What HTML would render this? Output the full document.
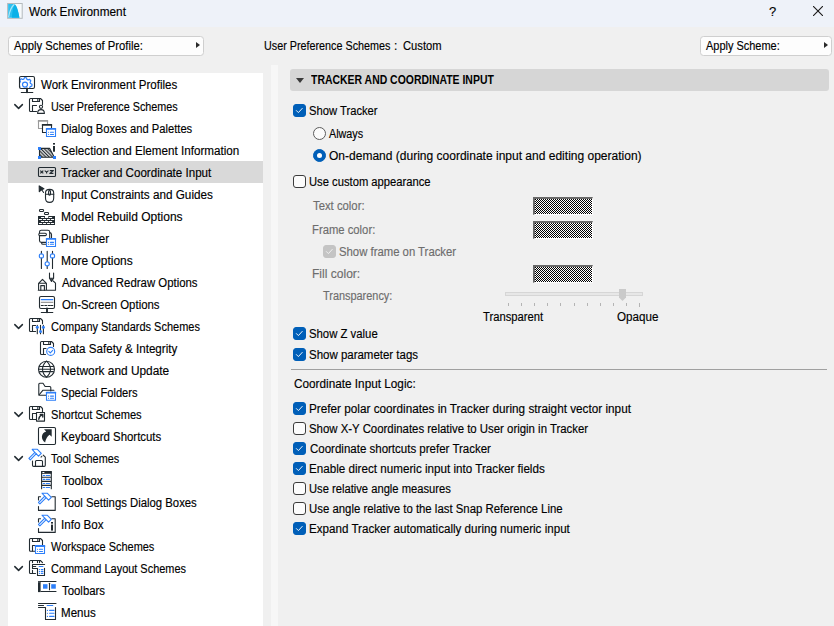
<!DOCTYPE html>
<html><head><meta charset="utf-8">
<style>
*{box-sizing:border-box;margin:0;padding:0}
html,body{width:834px;height:626px;overflow:hidden;background:#f0f0f0;font-family:"Liberation Sans",sans-serif;font-size:12px;color:#000}
.a{position:absolute}
.t{position:absolute;white-space:nowrap;line-height:14px;height:14px;transform-origin:0 0;-webkit-text-stroke:0.15px currentColor}
.gr{color:#6d6d6d}
#title{position:absolute;left:0;top:0;width:834px;height:27px;background:#eef2f9}
.btn{position:absolute;background:#fdfdfd;border:1px solid #cfcfcf;border-radius:3.5px}
.arr{position:absolute;width:0;height:0;border-top:3.5px solid transparent;border-bottom:3.5px solid transparent;border-left:4.5px solid #2a2a2a}
.cb{position:absolute;width:13px;height:13px;border:1px solid #3c3c3c;border-radius:3px;background:#fcfcfc}
.cb.on{background:#005fb8;border-color:#005fb8}
.cb svg{position:absolute;left:1px;top:1px}
.cb.dis{background:#c4c4c4;border-color:#c4c4c4}
.rd{position:absolute;width:13px;height:13px;border:1px solid #5c5c5c;border-radius:50%;background:#fbfbfb}
.rd.on{background:#005fb8;border-color:#005fb8}
.rd.on::after{content:"";position:absolute;left:3px;top:3px;width:5px;height:5px;border-radius:50%;background:#fff}
.sw{position:absolute;width:60px;height:18px;background-color:#fff;
 background-image:linear-gradient(45deg,#000 25%,transparent 25%,transparent 75%,#000 75%),linear-gradient(45deg,#000 25%,transparent 25%,transparent 75%,#000 75%);
 background-size:2px 2px;background-position:1px 0,0 1px;
 border-top:2px solid #6a6a6a;border-left:2px solid #6a6a6a;border-bottom:1px solid #fff;border-right:1px solid #fff}
.tick{position:absolute;top:303px;width:1px;height:3px;background:#b4b4b4}
</style></head><body>
<div id="title"></div>
<svg class="a" style="left:0;top:0" width="30" height="26" viewBox="0 0 30 26">
  <rect x="7.6" y="3.5" width="14.6" height="14.8" fill="#f6fafc" stroke="#b4b9bd" stroke-width="1"/>
  <path d="M8.1 4H14.3C16.6 5.2 18 10 19.4 17.8H8.1Z" fill="#2ec0ef"/>
  <path d="M11.8 17.8C12.5 11 13.2 6.5 14.6 4.6C16.6 6 18 10 19.4 17.8Z" fill="#0cb1e8"/>
  <path d="M8.6 17.2C9.5 12 11.5 6.5 14.4 4.3" fill="none" stroke="#a8e6f9" stroke-width="1.1"/>
</svg>
<div class="t" style="left:769px;top:5px;font-size:13px">?</div>
<svg class="a" style="left:813px;top:6px" width="10" height="10" viewBox="0 0 10 10"><path d="M0 0L10 10M10 0L0 10" stroke="#1a1a1a" stroke-width="1.1"/></svg>

<div class="btn" style="left:8px;top:36px;width:196px;height:20px"></div>
<div class="arr" style="left:196px;top:42px"></div>
<div class="t" style="left:394px;top:39px">:</div>
<div class="btn" style="left:700px;top:36px;width:132px;height:20px"></div>
<div class="arr" style="left:824px;top:42px"></div>

<div class="a" style="left:8px;top:73px;width:255px;height:553px;background:#fff"></div>
<div class="a" style="left:8px;top:161px;width:255px;height:22px;background:#d9d9d9"></div>
<div class="a" style="left:271px;top:65px;width:7px;height:561px;background:#f7f7f7"></div>

<div class="a" style="left:290px;top:69px;width:539px;height:22px;background:#d6d6d6;border-radius:3px"></div>
<div class="a" style="left:296px;top:78px;width:0;height:0;border-left:4px solid transparent;border-right:4px solid transparent;border-top:5px solid #3a3a3a"></div>
<div class="cb on" style="left:293px;top:104px"><svg width="11" height="11" viewBox="0 0 11 11"><path d="M1.1 4.3L3.4 6.6L7.5 2.1" fill="none" stroke="#eaf2fb" stroke-width="1"/></svg></div>
<div class="rd" style="left:313px;top:127px"></div>
<div class="rd on" style="left:313px;top:149px"></div>
<div class="cb" style="left:293px;top:175px"></div>
<div class="sw" style="left:533px;top:197px"></div>
<div class="sw" style="left:533px;top:221px"></div>
<div class="cb dis" style="left:323px;top:245px"><svg width="11" height="11" viewBox="0 0 11 11"><path d="M1.1 4.3L3.4 6.6L7.5 2.1" fill="none" stroke="#f0f0f0" stroke-width="1"/></svg></div>
<div class="sw" style="left:533px;top:265px"></div>
<div class="a" style="left:505px;top:292px;width:138px;height:4px;background:#e7e7e7;border:1px solid #d6d6d6"></div>
<svg class="a" style="left:618px;top:289px" width="9" height="12" viewBox="0 0 9 12"><path d="M1 0H8V8.6L4.5 12L1 8.6Z" fill="#cacaca"/></svg>
<div class="tick" style="left:508px"></div><div class="tick" style="left:521px"></div><div class="tick" style="left:534px"></div><div class="tick" style="left:547px"></div><div class="tick" style="left:560px"></div><div class="tick" style="left:574px"></div><div class="tick" style="left:587px"></div><div class="tick" style="left:600px"></div><div class="tick" style="left:613px"></div><div class="tick" style="left:626px"></div><div class="tick" style="left:639px;height:4px"></div>
<div class="cb on" style="left:293px;top:327px"><svg width="11" height="11" viewBox="0 0 11 11"><path d="M1.1 4.3L3.4 6.6L7.5 2.1" fill="none" stroke="#eaf2fb" stroke-width="1"/></svg></div>
<div class="cb on" style="left:293px;top:348px"><svg width="11" height="11" viewBox="0 0 11 11"><path d="M1.1 4.3L3.4 6.6L7.5 2.1" fill="none" stroke="#eaf2fb" stroke-width="1"/></svg></div>
<div class="a" style="left:291px;top:369px;width:536px;height:1px;background:#a0a0a0"></div>
<div class="cb on" style="left:293px;top:402px"><svg width="11" height="11" viewBox="0 0 11 11"><path d="M1.1 4.3L3.4 6.6L7.5 2.1" fill="none" stroke="#eaf2fb" stroke-width="1"/></svg></div>
<div class="cb" style="left:293px;top:422px"></div>
<div class="cb on" style="left:293px;top:442px"><svg width="11" height="11" viewBox="0 0 11 11"><path d="M1.1 4.3L3.4 6.6L7.5 2.1" fill="none" stroke="#eaf2fb" stroke-width="1"/></svg></div>
<div class="cb on" style="left:293px;top:462px"><svg width="11" height="11" viewBox="0 0 11 11"><path d="M1.1 4.3L3.4 6.6L7.5 2.1" fill="none" stroke="#eaf2fb" stroke-width="1"/></svg></div>
<div class="cb" style="left:293px;top:482px"></div>
<div class="cb" style="left:293px;top:502px"></div>
<div class="cb on" style="left:293px;top:522px"><svg width="11" height="11" viewBox="0 0 11 11"><path d="M1.1 4.3L3.4 6.6L7.5 2.1" fill="none" stroke="#eaf2fb" stroke-width="1"/></svg></div>
<svg class="a" style="left:0;top:0" width="270" height="626" viewBox="0 0 270 626">
<defs>
<clipPath id="mon"><rect x="20" y="77" width="14.3" height="11"/></clipPath>
<pattern id="hatch" width="2.4" height="3" patternUnits="userSpaceOnUse" patternTransform="rotate(-45)"><rect width="2.4" height="3" fill="#e0e0e0"/><rect width="1.1" height="3" fill="#2a3035"/></pattern>
</defs>
<g fill="none" stroke="#222b31" stroke-width="1.1" stroke-linecap="round" stroke-linejoin="round">
<!-- chevrons -->
<path d="M14.8 104.6L18.6 108.4L22.4 104.6" stroke-width="1.5"/>
<path d="M14.8 324.6L18.6 328.4L22.4 324.6" stroke-width="1.5"/>
<path d="M14.8 412.6L18.6 416.4L22.4 412.6" stroke-width="1.5"/>
<path d="M14.8 456.6L18.6 460.4L22.4 456.6" stroke-width="1.5"/>
<path d="M14.8 566.6L18.6 570.4L22.4 566.6" stroke-width="1.5"/>

<!-- 0 monitor gear -->
<g clip-path="url(#mon)"><path d="M23.89 79.11 L24.59 77.61 L26.45 77.75 L26.92 79.34 L28.09 79.93 L29.65 79.37 L30.87 80.78 L30.08 82.24 L30.49 83.49 L31.99 84.19 L31.85 86.05 L30.26 86.52 L29.67 87.69 L30.23 89.25 L28.82 90.47 L27.36 89.68 L26.11 90.09 L25.41 91.59 L23.55 91.45 L23.08 89.86 L21.91 89.27 L20.35 89.83 L19.13 88.42 L19.92 86.96 L19.51 85.71 L18.01 85.01 L18.15 83.15 L19.74 82.68 L20.33 81.51 L19.77 79.95 L21.18 78.73 L22.64 79.52Z" stroke="#2d7ff9" stroke-width="1.2"/><circle cx="25" cy="84.6" r="2.5" stroke="#2d7ff9" stroke-width="1.2"/></g>
<rect x="19.5" y="76.5" width="15" height="12" rx="1.5"/>
<path d="M27 88.5V92.3" stroke-width="1.9"/><path d="M21.3 92.5H32.8"/>

<!-- 1 floppy person -->
<path d="M36.5 111.5H30.5Q29.5 111.5 29.5 110.5V99.5Q29.5 98.5 30.5 98.5H40.5L42.5 100.5V104.5"/>
<path d="M32.5 98.5V101.5H39.5V98.5M37.8 99V101"/>
<path d="M32.5 111V105.5H36.5"/>
<circle cx="41" cy="106.8" r="1.6"/>
<path d="M37.6 113.4C37.6 110.6 39 109.6 41 109.6C43 109.6 44.4 110.6 44.4 113.4Z"/>

<!-- 2 dialog boxes -->
<rect x="38.5" y="120.5" width="9" height="8" fill="#fff" stroke="#9a9a9a"/>
<path d="M38.5 121H47.5" stroke="#9a9a9a" stroke-width="1.6"/>
<rect x="42.5" y="124.5" width="9" height="8" fill="#fff"/>
<path d="M42.5 125H51.5" stroke-width="1.6"/>
<rect x="46.5" y="128.5" width="9" height="8" fill="#fff" stroke="#2d7ff9"/>
<path d="M46.5 129H55.5" stroke="#2d7ff9" stroke-width="1.6"/>
<path d="M48.5 132.3H48.6M50.5 132.3H53.5M48.5 134.5H48.6M50.5 134.5H53.5" stroke="#2d7ff9"/>

<!-- 3 selection -->
<path d="M39.5 148.4H49.7L54.3 157.3H39.5Z" fill="url(#hatch)" stroke="#222b31"/>
<rect x="38" y="147" width="3" height="3" fill="#2d7ff9" stroke="none"/>
<rect x="38" y="156" width="3" height="3" fill="#2d7ff9" stroke="none"/>
<rect x="53" y="156" width="3" height="3" fill="#2d7ff9" stroke="none"/>
<rect x="53" y="143" width="2" height="1.6" fill="#222b31" stroke="none"/>
<rect x="53" y="146" width="2" height="5.7" fill="#222b31" stroke="none"/>

<!-- 4 xyz -->
<rect x="38.5" y="167.5" width="17" height="9" rx="1"/>
<path d="M40.3 170.6L43.3 173.4M43.3 170.6L40.3 173.4M44.7 170.6L46.6 172.1L48.5 170.6M46.6 172.1V173.4M49.8 170.6H53.4L49.8 173.4H53.4" stroke-width="1.2" stroke-linecap="butt"/>

<!-- 5 input constraints -->
<path d="M39.2 185.9L43.9 188.7L41.5 189.8L39.3 191.7Z" fill="#222b31"/>
<path d="M41.5 189.5L43.6 192.5"/>
<path d="M45.5 193Q45.5 189.4 49.6 189.4Q53.7 189.4 53.7 193V198Q53.7 202.4 49.6 202.4Q45.5 202.4 45.5 198Z"/>
<path d="M45.5 194.3H53.7"/>
<rect x="48.6" y="190.6" width="1.9" height="4.6" rx="0.9"/>

<!-- 6 bricks -->
<rect x="39.5" y="209.5" width="4" height="2" rx="0.8"/>
<rect x="44.5" y="212.5" width="4" height="2" rx="0.8"/>
<path d="M38 216H45V218H48.3V216H55V225H38Z" fill="#222b31" stroke="none"/>
<g fill="#fff" stroke="none">
<rect x="40.9" y="217" width="3.5" height="1.1" rx="0.5"/><rect x="48.8" y="217" width="3.4" height="1.1" rx="0.5"/>
<rect x="38.9" y="219" width="3.3" height="1.1" rx="0.5"/><rect x="42.9" y="219" width="3.3" height="1.1" rx="0.5"/><rect x="46.9" y="219" width="3.2" height="1.1" rx="0.5"/><rect x="50.8" y="219" width="3.4" height="1.1" rx="0.5"/>
<rect x="40.9" y="221" width="3.4" height="1.1" rx="0.5"/><rect x="44.8" y="221" width="3.3" height="1.1" rx="0.5"/><rect x="48.8" y="221" width="3.4" height="1.1" rx="0.5"/>
<rect x="38.9" y="223" width="3.3" height="1.1" rx="0.5"/><rect x="42.9" y="223" width="3.3" height="1.1" rx="0.5"/><rect x="46.9" y="223" width="3.2" height="1.1" rx="0.5"/><rect x="50.8" y="223" width="3.4" height="1.1" rx="0.5"/>
</g>
<!-- 7 publisher -->
<path d="M49.7 232.6Q51.5 232.8 51.5 234.5V238.5"/>
<path d="M41.6 242.5V243Q41.6 244.3 43 244.3H46.2"/>
<path d="M46 242.4H41.3Q39.5 242.4 39.5 240.6V232.1Q39.5 230.3 41.3 230.3H47.9Q49.7 230.3 49.7 232.1V238.3"/>
<rect x="38.8" y="233.3" width="7.6" height="2.3" rx="1.1" fill="#fff"/>
<rect x="46.5" y="238.5" width="9" height="8" fill="#fff" stroke="#2d7ff9"/>
<path d="M46.5 239H55.5" stroke="#2d7ff9" stroke-width="1.6"/>
<path d="M48.5 242.4H48.6M50.5 242.4H53.5M48.5 244.3H48.6M50.5 244.3H53.5" stroke="#2d7ff9"/>
<!-- 8 more options -->
<path d="M41.4 251.2V253.7M41.4 258.1V268.4M47.2 251.2V261.6M47.2 266V268.4M52.5 251.2V253.7M52.5 258.1V268.4"/>
<circle cx="41.4" cy="255.9" r="2.1" stroke="#2d7ff9"/>
<circle cx="47.2" cy="263.8" r="2.1" stroke="#2d7ff9"/>
<circle cx="52.5" cy="255.9" r="2.1" stroke="#2d7ff9"/>

<!-- 9 advanced redraw -->
<path d="M38.6 290.3V283.3L42.5 279.3L46.4 283.3V290.3M38.6 283.3H46.4M38.3 290.3H55.5V283.1L53.2 281"/>
<path d="M40.8 290.3V285.6H44.4V290.3"/>
<path d="M49.5 273.1V278.2L51.5 281.5L53.6 278.2V273.1M49.5 278.2H53.6"/>
<circle cx="51.5" cy="279.6" r="0.7" stroke-width="0.9"/>
<!-- 10 on-screen -->
<rect x="39.5" y="296.5" width="15" height="12" rx="1.5"/>
<path d="M47 308.5V312.3" stroke-width="1.9"/><path d="M41.3 312.5H52.8"/>
<path d="M41.3 299.6H52.8" stroke="#2d7ff9"/>
<path d="M41.3 302.4H52.8" stroke="#9a9a9a"/>
<path d="M41.3 305.5H43.3M44.8 305.5H46.8M48.3 305.5H50.3M51.3 305.5H52.8"/>

<!-- 11 company standards floppy -->
<path d="M35.6 331.5H30.5Q29.5 331.5 29.5 330.5V319.5Q29.5 318.5 30.5 318.5H40.5L42.5 320.5V323.7"/>
<path d="M32.5 318.5V321.5H39.5V318.5M37.8 319V321"/>
<path d="M32.5 331V325.5H35.6"/>
<path d="M37.3 325.3V333.7M40.5 325.3V333.7M43.4 325.3V333.7"/>
<g fill="#2d7ff9" stroke="none"><circle cx="37.3" cy="327.3" r="1.5"/><circle cx="40.5" cy="331.5" r="1.5"/><circle cx="43.4" cy="327.3" r="1.5"/></g>

<!-- 12 data safety -->
<path d="M45.5 354.5H41.5Q40.5 354.5 40.5 353.5V342.5Q40.5 341.5 41.5 341.5H51.5L53.5 343.5V346.5"/>
<path d="M43.5 341.5V344.5H50.5V341.5M48.8 342V344"/>
<path d="M43.5 354V348.5H46"/>
<circle cx="50.7" cy="351.4" r="4" fill="#fff" stroke="#2d7ff9"/>
<path d="M48.8 351.4L50.3 352.8L52.7 350.3" stroke="#2d7ff9"/>

<!-- 13 globe -->
<circle cx="46.5" cy="369.2" r="8"/>
<path d="M46.5 361.2Q50.5 365 50.5 369.2Q50.5 373.4 46.5 377.2Q42.5 373.4 42.5 369.2Q42.5 365 46.5 361.2Z"/>
<path d="M38.5 369.2H54.5M39.4 366.5H53.6M39.6 371.6H53.4"/>

<!-- 14 special folders -->
<path d="M46 395.3H39.8Q38.8 395.3 38.8 394.3V384.3Q38.8 383.3 39.8 383.3H43L45.1 386.5H49.8Q50.8 386.5 50.8 387.5V391"/>
<path d="M39 395L42.8 390.3H53.9"/>
<rect x="46.5" y="392.3" width="9" height="8" fill="#fff" stroke="#2d7ff9"/>
<path d="M46.5 392.8H55.5" stroke="#2d7ff9" stroke-width="1.6"/>
<path d="M48.5 396.1H48.6M50.5 396.1H53.5M48.5 398.2H48.6M50.5 398.2H53.5" stroke="#2d7ff9"/>
<!-- 15 shortcut schemes -->
<path d="M36.5 419.5H30.5Q29.5 419.5 29.5 418.5V407.5Q29.5 406.5 30.5 406.5H40.5L42.5 408.5V412.5"/>
<path d="M32.5 406.5V409.5H39.5V406.5M37.8 407V409"/>
<path d="M32.5 419V413.5H36.4"/>
<rect x="36.5" y="412.5" width="8" height="8.6" fill="#fff"/>
<path d="M38.8 419.2Q39 416 42 414.8M40.3 414.5H42.8V417" stroke-width="1.4"/>

<!-- 16 keyboard shortcuts -->
<rect x="38.5" y="427.5" width="17" height="17" rx="1.2"/>
<path d="M44 429.3H51.7V436.8L49.6 434.7Q46.3 436.6 45.1 442.5Q41.8 440 41.9 436.4Q42.3 432.8 46.2 431.5Z" fill="#222b31" stroke="none"/>

<!-- 17 tool schemes -->
<path d="M32.5 461V465.3Q32.5 466.4 33.6 466.4H44.2Q45.3 466.4 45.3 465.3V457.2L43.2 455.1"/>
<path d="M35.5 466V461.5Q35.5 460.5 36.5 460.5H41.5Q42.5 460.5 42.5 461.5V466"/>
<path d="M41.8 456.2Q41.8 457 41 457"/>
<path d="M32.2 449.3H37.4L41.3 453.3L38.5 456.1L34.6 452.1Z M34.9 452.3L28.9 458.4L30.3 459.8L36.3 453.7" stroke="#2d7ff9"/>

<!-- 18 toolbox -->
<path d="M41.6 488.7V471.6H51.3V488.7M41.6 477.3H51.3M41.6 481.4H51.3M41.6 485.4H51.3"/>
<rect x="41.3" y="471.2" width="10.3" height="2.6" fill="#222b31" stroke="none"/>
<rect x="42.3" y="471.9" width="2.2" height="1.1" rx="0.5" fill="#fff" stroke="none"/>
<path d="M43.2 475.5H44.6M46.2 475.5H49.6M43.2 479.4H44.6M46.2 479.4H49.6M43.2 483.5H44.6M46.2 483.5H49.6M43.2 487.5H44.6M46.2 487.5H49.6" stroke="#2d7ff9"/>

<!-- 19 tool settings -->
<path d="M38.5 500V496.7H40.5M51.8 496.7H55.2V510.4H38.5V506.5"/>
<path d="M42 493.2H47.2L51.3 497.4L48.6 500.2L44.5 496Z M44.8 496.2L38.5 502.5L39.9 503.9L46.2 497.6" stroke="#2d7ff9"/>

<!-- 20 info box -->
<path d="M38.5 522V518.7H40.5M51.8 518.7H55.2V532.4H38.5V528.5"/>
<path d="M42 515.2H47.2L51.3 519.4L48.6 522.2L44.5 518Z M44.8 518.2L38.5 524.5L39.9 525.9L46.2 519.6" stroke="#2d7ff9"/>
<rect x="51" y="522" width="2" height="1.6" fill="#222b31" stroke="none"/>
<rect x="51" y="524.6" width="2" height="6" fill="#222b31" stroke="none"/>

<!-- 21 workspace -->
<path d="M35 551.3H30.5Q29.5 551.3 29.5 550.3V539.5Q29.5 538.5 30.5 538.5H40.5L42.5 540.5V545"/>
<path d="M32.5 538.5V541.5H39.5V538.5M37.8 539V541"/>
<path d="M32.5 551V545.5H35"/>
<rect x="35.5" y="545.5" width="9" height="8" fill="#fff" stroke="#2d7ff9"/>
<path d="M35.5 546.1H44.5" stroke="#2d7ff9" stroke-width="1.8"/>
<path d="M37.5 549.3H37.6M39.5 549.3H42.5M37.5 551.5H37.6M39.5 551.5H42.5" stroke="#2d7ff9"/>

<!-- 22 command layout -->
<path d="M35.5 573.5H30.5Q29.5 573.5 29.5 572.5V561.5Q29.5 560.5 30.5 560.5H40.4L42.5 562.6"/>
<path d="M32.5 560.5V562.6M37.5 560.5V562.6M39.5 560.5V562.6M32.5 564.5H44.6M32.5 564.5V568.5H37.5V575.5H44.5V568.2M32.5 566.5H35.7M32.5 570.4V573.5"/>
<path d="M39.2 566.5H42.9" stroke="#2d7ff9" stroke-width="1.2"/>
<path d="M39.4 569.5H39.5M41.3 569.5H42.9M39.4 571.4H39.5M41.3 571.4H42.9M39.4 573.3H39.5M41.3 573.3H42.9" stroke="#2d7ff9" stroke-width="1.2"/>
<!-- 23 toolbars -->
<path d="M38.5 581.5H56M41 591.5H56"/>
<rect x="38" y="581" width="2.6" height="11.1" fill="#222b31" stroke="none"/>
<rect x="38.6" y="581.6" width="0.8" height="0.8" fill="#fff" stroke="none"/>
<rect x="43" y="584.2" width="4.5" height="4.5" fill="#2d7ff9" stroke="none"/>
<rect x="51.2" y="584.2" width="4.6" height="4.5" fill="#2d7ff9" stroke="none"/>
<path d="M49.5 583.2V589.7"/>

<!-- 24 menus -->
<path d="M38.5 603.5H56M38.5 605.5H43.5M38.5 607.5H45.5V619.5H55.5V607.5"/>
<path d="M47.2 605.5H52.8" stroke="#2d7ff9"/>
<path d="M47.4 610.4H47.5M49.6 610.4H54M47.4 613.3H47.5M49.6 613.3H54M47.4 616.4H47.5M49.6 616.4H54" stroke="#2d7ff9"/>
</g>
</svg>
<div class="t" style="left:29.4px;top:5px;transform:scaleX(0.9843)">Work Environment</div>
<div class="t" style="left:14.2px;top:39px;transform:scaleX(0.9380)">Apply Schemes of Profile:</div>
<div class="t" style="left:264.4px;top:39px;transform:scaleX(0.8979)">User Preference Schemes</div>
<div class="t" style="left:402.5px;top:39px;transform:scaleX(0.9317)">Custom</div>
<div class="t" style="left:706.4px;top:39px;transform:scaleX(0.9138)">Apply Scheme:</div>
<div class="t" style="left:41.1px;top:78px;transform:scaleX(0.9606)">Work Environment Profiles</div>
<div class="t" style="left:50.5px;top:100px;transform:scaleX(0.9007)">User Preference Schemes</div>
<div class="t" style="left:60.6px;top:122px;transform:scaleX(0.9321)">Dialog Boxes and Palettes</div>
<div class="t" style="left:60.5px;top:144px;transform:scaleX(0.9720)">Selection and Element Information</div>
<div class="t" style="left:61.2px;top:166px;transform:scaleX(0.9654)">Tracker and Coordinate Input</div>
<div class="t" style="left:60.5px;top:188px;transform:scaleX(0.9773)">Input Constraints and Guides</div>
<div class="t" style="left:60.5px;top:210px;transform:scaleX(1.0017)">Model Rebuild Options</div>
<div class="t" style="left:60.5px;top:232px;transform:scaleX(0.9612)">Publisher</div>
<div class="t" style="left:60.5px;top:254px;transform:scaleX(0.9958)">More Options</div>
<div class="t" style="left:61.5px;top:276px;transform:scaleX(0.9497)">Advanced Redraw Options</div>
<div class="t" style="left:61.5px;top:298px;transform:scaleX(0.9495)">On-Screen Options</div>
<div class="t" style="left:51.4px;top:320px;transform:scaleX(0.9147)">Company Standards Schemes</div>
<div class="t" style="left:60.5px;top:342px;transform:scaleX(0.9689)">Data Safety &amp; Integrity</div>
<div class="t" style="left:60.5px;top:364px;transform:scaleX(0.9889)">Network and Update</div>
<div class="t" style="left:60.6px;top:386px;transform:scaleX(0.9256)">Special Folders</div>
<div class="t" style="left:50.5px;top:408px;transform:scaleX(0.9247)">Shortcut Schemes</div>
<div class="t" style="left:60.5px;top:430px;transform:scaleX(0.9510)">Keyboard Shortcuts</div>
<div class="t" style="left:51.4px;top:452px;transform:scaleX(0.9040)">Tool Schemes</div>
<div class="t" style="left:61.5px;top:474px;transform:scaleX(0.9829)">Toolbox</div>
<div class="t" style="left:61.5px;top:496px;transform:scaleX(0.9441)">Tool Settings Dialog Boxes</div>
<div class="t" style="left:60.5px;top:518px;transform:scaleX(0.9674)">Info Box</div>
<div class="t" style="left:51.4px;top:540px;transform:scaleX(0.9133)">Workspace Schemes</div>
<div class="t" style="left:51.4px;top:562px;transform:scaleX(0.9115)">Command Layout Schemes</div>
<div class="t" style="left:61.5px;top:584px;transform:scaleX(0.9489)">Toolbars</div>
<div class="t" style="left:60.5px;top:606px;transform:scaleX(0.9629)">Menus</div>
<div class="t" style="left:310.7px;top:73px;transform:scaleX(0.8705);font-weight:bold;-webkit-text-stroke:0">TRACKER AND COORDINATE INPUT</div>
<div class="t" style="left:308.6px;top:104px;transform:scaleX(0.9347)">Show Tracker</div>
<div class="t" style="left:329.3px;top:127px;transform:scaleX(0.8974)">Always</div>
<div class="t" style="left:329.3px;top:149px;transform:scaleX(1.0013)">On-demand (during coordinate input and editing operation)</div>
<div class="t" style="left:308.6px;top:175px;transform:scaleX(0.9349)">Use custom appearance</div>
<div class="t gr" style="left:313.2px;top:199px;transform:scaleX(0.9426)">Text color:</div>
<div class="t gr" style="left:312.3px;top:223px;transform:scaleX(0.9394)">Frame color:</div>
<div class="t gr" style="left:338.7px;top:245px;transform:scaleX(0.9439)">Show frame on Tracker</div>
<div class="t gr" style="left:312.2px;top:267px;transform:scaleX(1.0043)">Fill color:</div>
<div class="t gr" style="left:323.2px;top:289px;transform:scaleX(0.9092)">Transparency:</div>
<div class="t" style="left:482.5px;top:310px;transform:scaleX(0.9359)">Transparent</div>
<div class="t" style="left:616.8px;top:310px;transform:scaleX(0.9690)">Opaque</div>
<div class="t" style="left:308.6px;top:327px;transform:scaleX(0.9451)">Show Z value</div>
<div class="t" style="left:308.5px;top:348px;transform:scaleX(0.9558)">Show parameter tags</div>
<div class="t" style="left:293.7px;top:377px;transform:scaleX(0.9805)">Coordinate Input Logic:</div>
<div class="t" style="left:308.5px;top:402px;transform:scaleX(0.9790)">Prefer polar coordinates in Tracker during straight vector input</div>
<div class="t" style="left:308.6px;top:422px;transform:scaleX(0.9498)">Show X-Y Coordinates relative to User origin in Tracker</div>
<div class="t" style="left:309.5px;top:442px;transform:scaleX(0.9587)">Coordinate shortcuts prefer Tracker</div>
<div class="t" style="left:308.5px;top:462px;transform:scaleX(0.9711)">Enable direct numeric input into Tracker fields</div>
<div class="t" style="left:308.6px;top:482px;transform:scaleX(0.9325)">Use relative angle measures</div>
<div class="t" style="left:308.6px;top:502px;transform:scaleX(0.9481)">Use angle relative to the last Snap Reference Line</div>
<div class="t" style="left:308.5px;top:522px;transform:scaleX(0.9680)">Expand Tracker automatically during numeric input</div></body></html>
